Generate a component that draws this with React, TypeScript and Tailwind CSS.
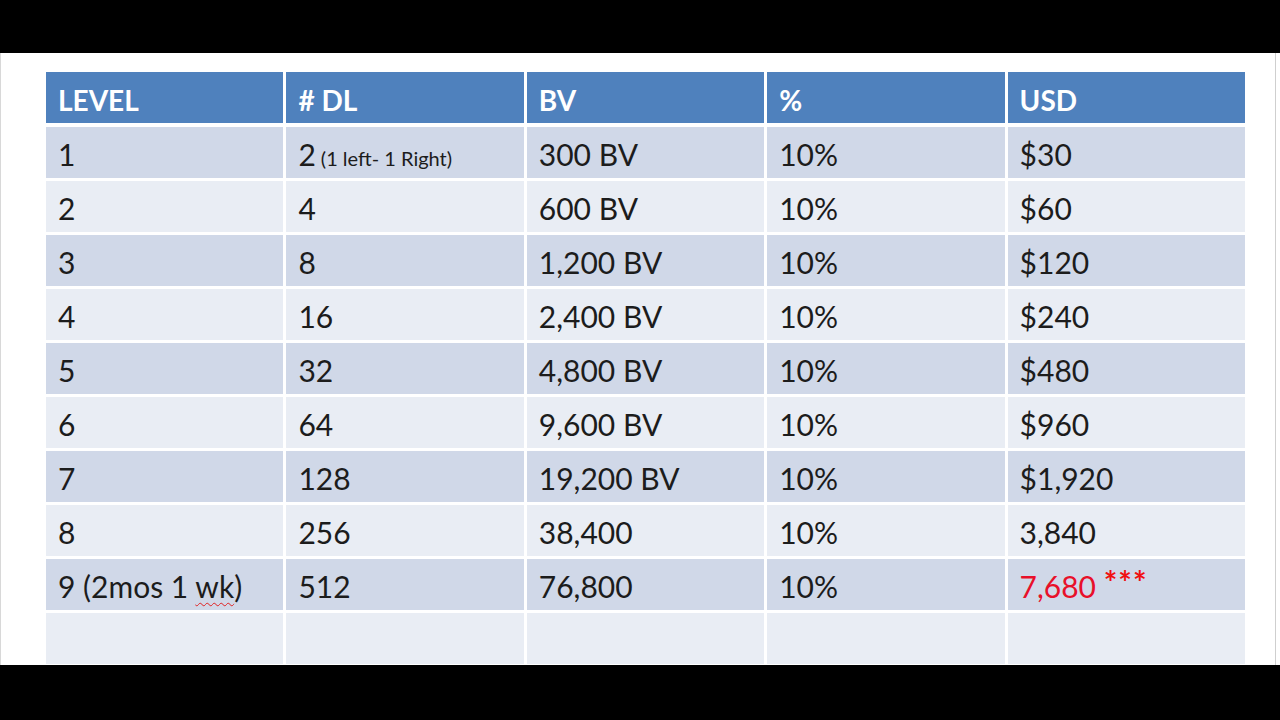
import React from "react";

const rows: { a: React.ReactNode; b: React.ReactNode; c: string; d: string; e: React.ReactNode }[] = [
  { a: "1", b: (<><span>2</span><span className="text-[20px] ml-[5px]">(1 left- 1 Right)</span></>), c: "300 BV", d: "10%", e: "$30" },
  { a: "2", b: "4", c: "600 BV", d: "10%", e: "$60" },
  { a: "3", b: "8", c: "1,200 BV", d: "10%", e: "$120" },
  { a: "4", b: "16", c: "2,400 BV", d: "10%", e: "$240" },
  { a: "5", b: "32", c: "4,800 BV", d: "10%", e: "$480" },
  { a: "6", b: "64", c: "9,600 BV", d: "10%", e: "$960" },
  { a: "7", b: "128", c: "19,200 BV", d: "10%", e: "$1,920" },
  { a: "8", b: "256", c: "38,400", d: "10%", e: "3,840" },
  {
    a: (<>9 (2mos 1{" "}<span className="underline decoration-wavy decoration-[#e02020] decoration-1 underline-offset-4">wk</span>)</>),
    b: "512",
    c: "76,800",
    d: "10%",
    e: (
      <span className="text-[#e8102a]">
        7,680{" "}
        <span className="inline-block leading-none text-[#f01010] text-[32px] font-bold -translate-y-[3px] tracking-[1px]">***</span>
      </span>
    ),
  },
  { a: "", b: "", c: "", d: "", e: "" },
];

export default function App() {
  return (
    <div className="w-[1280px] h-[720px] bg-black flex flex-col" style={{ fontFamily: "Lato, 'Open Sans', sans-serif" }}>
      <div className="h-[53px] shrink-0" />
      <div className="h-[612px] shrink-0 bg-white border-l border-[#d8d8d8] border-r-[5px] border-r-white relative">
        <div className="absolute right-[-1px] top-0 bottom-0 w-[1px] bg-[#cfcfcf]" />
        <div className="pt-[19px] pl-[45px] w-[1244px]">
          <div className="grid grid-cols-5 gap-x-[3px] h-[51px] bg-white">
            {["LEVEL", "# DL", "BV", "%", "USD"].map((h) => (
              <div key={h} className="bg-[#4f81bd] text-white font-bold text-[28px] pl-[12px] flex items-center leading-none pt-[5px]">
                <span>{h}</span>
              </div>
            ))}
          </div>
          <div className="flex flex-col gap-y-[3px] mt-[4px]">
            {rows.map((r, i) => {
              const bg = i % 2 === 0 ? "bg-[#d0d8e8]" : "bg-[#e9edf4]";
              return (
                <div key={i} className="grid grid-cols-5 gap-x-[3px] h-[51px]">
                  {[r.a, r.b, r.c, r.d, r.e].map((c, j) => (
                    <div key={j} className={`${bg} text-[#1c1c1c] text-[30px] pl-[12px] pt-[3px] flex items-center leading-none whitespace-nowrap`}>
                      <span>{c}</span>
                    </div>
                  ))}
                </div>
              );
            })}
          </div>
        </div>
      </div>
      <div className="flex-1" />
    </div>
  );
}
